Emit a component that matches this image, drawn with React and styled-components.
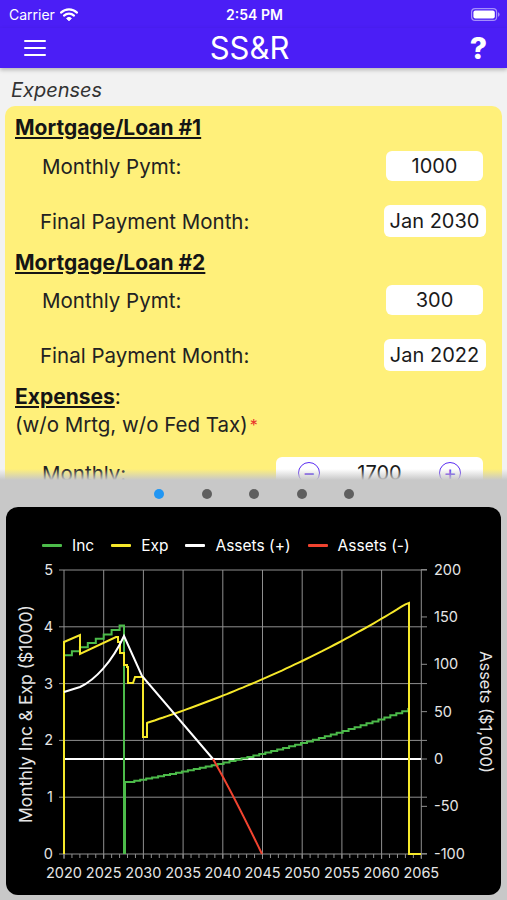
import styled, { createGlobalStyle } from "styled-components"

const GlobalStyle = createGlobalStyle`
  html, body { margin:0; padding:0; }
  body { font-family: Inter, "Noto Sans", sans-serif; background:#c8c8c8; }
`

const PURPLE = "#4b1ef6"

const Screen = styled.div`
  width:507px;
  height:900px;
  display:flex;
  flex-direction:column;
  overflow:hidden;
  background:#c8c8c8;
`

const StatusBar = styled.div`
  height:28px;
  flex:none;
  background:${PURPLE};
  color:#fff;
  display:grid;
  grid-template-columns:1fr auto 1fr;
  align-items:center;
  padding:0 7px 0 9px;
  font-size:14px;
`

const Carrier = styled.div`
  display:flex;
  align-items:center;
  gap:5px;
`

const Clock = styled.div`
  font-weight:600;
`

const Battery = styled.div`
  justify-self:end;
  display:flex;
  align-items:center;
`

const NavBar = styled.div`
  height:40px;
  flex:none;
  background:${PURPLE};
  color:#fff;
  display:grid;
  grid-template-columns:1fr auto 1fr;
  align-items:center;
  padding:0 20px 0 24px;
  position:relative;
  z-index:2;
  box-shadow:0 2px 4px rgba(0,0,0,0.25);
`

const Burger = styled.div`
  display:flex;
  flex-direction:column;
  gap:4.5px;
  & span{
    display:block;
    width:22px;
    height:2.5px;
    border-radius:1px;
    background:#fff;
  }
`

const Title = styled.div`
  font-size:31px;
  line-height:40px;
  margin-right:12px;
`

const Help = styled.div`
  justify-self:end;
  font-size:30px;
  font-weight:800;
  line-height:40px;
`

const FormArea = styled.div`
  flex:none;
  height:412px;
  position:relative;
  overflow:hidden;
  background:#f2f2f2;
  padding:11px 5px 0;
  box-sizing:border-box;
`

const PageTitle = styled.div`
  font-style:italic;
  font-size:20px;
  line-height:22px;
  color:#333;
  margin:0 0 5px 6px;
`

const Card = styled.div`
  background:#fff07a;
  border-radius:10px;
  padding:10px 10px 30px;
`

const Heading = styled.div`
  font-weight:700;
  font-size:21px;
  line-height:24px;
  color:#151515;
  margin-top:${p => p.$top || 0}px;
  & u{ text-underline-offset:2px; }
`

const SubNote = styled.div`
  font-size:20.5px;
  line-height:24px;
  color:#222;
  margin-top:4px;
`

const Star = styled.span`
  color:#e8322b;
  font-size:16px;
  vertical-align:top;
  margin-left:2px;
`

const Row = styled.div`
  display:flex;
  align-items:center;
  justify-content:space-between;
  margin-top:${p => p.$top}px;
  padding-right:${p => p.$right || 4}px;
`

const Label = styled.div`
  font-size:20.5px;
  color:#222;
  padding-left:${p => p.$indent}px;
`

const FieldSlot = styled.div`
  width:107px;
  display:flex;
  justify-content:center;
`

const Field = styled.div`
  width:${p => p.$w}px;
  height:${p => p.$h}px;
  background:#fff;
  border-radius:6px;
  display:flex;
  align-items:center;
  justify-content:center;
  font-size:20px;
  color:#1a1a1a;
`

const Stepper = styled.div`
  width:207px;
  height:32px;
  background:#fff;
  border-radius:6px;
  display:flex;
  align-items:center;
  justify-content:space-between;
  padding:0 22px 0 22px;
  box-sizing:border-box;
  font-size:20px;
  color:#1a1a1a;
`

const StepBtn = styled.div`
  width:22px;
  height:22px;
  border-radius:50%;
  border:1.5px solid #5a2cf2;
  color:#5a2cf2;
  display:flex;
  align-items:center;
  justify-content:center;
  font-size:20px;
  line-height:1;
  box-sizing:border-box;
`

const Fade = styled.div`
  position:absolute;
  left:0;
  right:0;
  bottom:0;
  height:11px;
  background:linear-gradient(to bottom, rgba(200,200,200,0), #c8c8c8);
`

const Pager = styled.div`
  height:27px;
  flex:none;
  display:flex;
  align-items:center;
  justify-content:center;
  gap:37.5px;
  padding-left:1px;
`

const Dot = styled.span`
  width:10px;
  height:10px;
  border-radius:50%;
  background:${p => (p.$on ? "#2196f3" : "#5f5f5f")};
`

const ChartCard = styled.div`
  flex:1;
  margin:0 6px 5px;
  background:#000;
  border-radius:12px;
  display:flex;
  flex-direction:column;
  overflow:hidden;
`

const Legend = styled.div`
  display:flex;
  align-items:center;
  gap:17px;
  padding:28px 0 0 36px;
  height:20px;
  flex:none;
  color:#fff;
  font-size:15.5px;
`

const LegendItem = styled.div`
  display:flex;
  align-items:center;
  gap:10px;
  &::before{
    content:"";
    width:20px;
    height:3px;
    border-radius:1px;
    background:${p => p.$color};
  }
`

const Plot = styled.svg`
  flex:1;
  display:block;
  width:100%;
  font-family: Inter, "Noto Sans", sans-serif;
`

// scales (page pixel coords)
const X = yr => 64 + (yr - 2020) * 7.94
const YL = v => 854 - v * 56.8
const YR = a => 759 - a * 0.947

const GREEN = "#4cbb4a"
const YELLOW = "#f6e82a"
const RED = "#f0432f"

function stairs(from, to, step, base, grow, xEnd) {
  let d = ""
  let yr = from
  while (yr < to - 0.001) {
    const next = Math.min(yr + step, to)
    const v = base * Math.pow(1 + grow, yr - from)
    d += `V${YL(v).toFixed(1)}`
    d += `H${(next === to ? xEnd : X(next)).toFixed(1)}`
    yr = next
  }
  return d
}

function expCurve(from, to, base, grow) {
  let d = ""
  for (let yr = from; yr <= to + 0.001; yr += 0.5) {
    const v = base * Math.pow(1 + grow, yr - from)
    d += `L${X(yr).toFixed(1)},${YL(v).toFixed(1)}`
  }
  return d
}

const Chart = () => {
  const years = []
  for (let y = 2020; y <= 2065; y++) years.push(y)
  const greenA = `M64,854 ` + stairs(2020, 2027.3, 1, 3.5, 0.02, 122) + ` H124 V854`
  const greenB = `M125,854 V782 ` + stairs(2028.1, 2063.4, 0.75, 1.27, 0.02, 409) + ` V854 H421`
  const yellow =
    `M64,854 V642 L80,635 V654 L116,637 H118 V642 H120 V653 H124 V665 H127 V667 H128 V683 H133 L135,677 H143 V737 H147 V723 ` +
    expCurve(2030.5, 2063.3, 2.31, 0.02) +
    ` L409,603 V854 H421`
  const white = `M64,692 L80,687 C95,680 112,662 124,636 L142,676 L213,759`
  const red = `M213,759 Q234,796 262,854`

  return (
    <Plot viewBox="6 555 495 340">
      {/* grid */}
      <g stroke="#8f8f8f" strokeWidth="1" fill="none">
        {[0, 1, 2, 3, 4, 5].map(v => (
          <line key={"h" + v} x1="59" x2="427" y1={YL(v)} y2={YL(v)} />
        ))}
        {[2020, 2025, 2030, 2035, 2040, 2045, 2050, 2055, 2060, 2065].map(y => (
          <line key={"v" + y} x1={X(y)} x2={X(y)} y1="570" y2="859" />
        ))}
        {[200, 150, 100, 50, 0, -50, -100].map(a => (
          <line key={"r" + a} x1="421" x2="427" y1={YR(a)} y2={YR(a)} />
        ))}
        {years.map(y => (
          <line key={"t" + y} x1={X(y)} x2={X(y)} y1="854" y2="858" />
        ))}
      </g>

      {/* labels */}
      <g fill="#e6e6e6" fontSize="14.5">
        {[0, 1, 2, 3, 4, 5].map(v => (
          <text key={"l" + v} x="53" y={YL(v) + 5} textAnchor="end">{v}</text>
        ))}
        {[200, 150, 100, 50, 0, -50, -100].map(a => (
          <text key={"rl" + a} x="434" y={YR(a) + 5}>{a}</text>
        ))}
        {[2020, 2025, 2030, 2035, 2040, 2045, 2050, 2055, 2060, 2065].map(y => (
          <text key={"b" + y} x={X(y)} y="878" textAnchor="middle">{y}</text>
        ))}
        <text x="27" y="714" fontSize="17.5" textAnchor="middle" dominantBaseline="middle" transform="rotate(-90 27 714)">
          Monthly Inc &amp; Exp ($1000)
        </text>
        <text x="484" y="712" fontSize="16.5" textAnchor="middle" dominantBaseline="middle" transform="rotate(90 484 712)">
          Assets ($1,000)
        </text>
      </g>

      {/* data */}
      <g fill="none" strokeWidth="2" strokeLinejoin="miter">
        <path d="M64,759 H421" stroke="#fff" />
        <path d={greenA} stroke={GREEN} />
        <path d={greenB} stroke={GREEN} />
        <path d={yellow} stroke={YELLOW} />
        <path d={white} stroke="#fff" />
        <path d={red} stroke={RED} />
      </g>
    </Plot>
  )
}

const Wifi = () => (
  <svg width="18" height="13" viewBox="0 0 18 13">
    <path d="M1 4.6 A11.5 11.5 0 0 1 17 4.6" stroke="#fff" strokeWidth="2.2" fill="none" strokeLinecap="round" />
    <path d="M4 7.6 A7.2 7.2 0 0 1 14 7.6" stroke="#fff" strokeWidth="2.2" fill="none" strokeLinecap="round" />
    <path d="M6.6 10.4 A3.4 3.4 0 0 1 11.4 10.4 L9 12.8 Z" fill="#fff" stroke="#fff" strokeWidth="1" strokeLinejoin="round" />
  </svg>
)

const BatteryIcon = () => (
  <svg width="29" height="13" viewBox="0 0 29 13">
    <rect x="0.6" y="0.6" width="25" height="11.8" rx="3.5" fill="none" stroke="rgba(255,255,255,0.5)" strokeWidth="1.2" />
    <rect x="2.4" y="2.4" width="21.4" height="8.2" rx="2" fill="#fff" />
    <path d="M27 4.3 Q28.6 4.6 28.6 6.5 Q28.6 8.4 27 8.7 Z" fill="rgba(255,255,255,0.5)" />
  </svg>
)

const App = () => {
  return (
    <Screen>
      <GlobalStyle />
      <StatusBar>
        <Carrier>Carrier <Wifi /></Carrier>
        <Clock>2:54 PM</Clock>
        <Battery><BatteryIcon /></Battery>
      </StatusBar>
      <NavBar>
        <Burger><span /><span /><span /></Burger>
        <Title>SS&amp;R</Title>
        <Help>?</Help>
      </NavBar>

      <FormArea>
        <PageTitle>Expenses</PageTitle>
        <Card>
          <Heading><u>Mortgage/Loan #1</u></Heading>
          <Row $top={11}>
            <Label $indent={27}>Monthly Pymt:</Label>
            <FieldSlot><Field $w={97} $h={30}>1000</Field></FieldSlot>
          </Row>
          <Row $top={24}>
            <Label $indent={25}>Final Payment Month:</Label>
            <FieldSlot><Field $w={102} $h={32}>Jan 2030</Field></FieldSlot>
          </Row>

          <Heading $top={14}><u>Mortgage/Loan #2</u></Heading>
          <Row $top={10}>
            <Label $indent={27}>Monthly Pymt:</Label>
            <FieldSlot><Field $w={97} $h={30}>300</Field></FieldSlot>
          </Row>
          <Row $top={24}>
            <Label $indent={25}>Final Payment Month:</Label>
            <FieldSlot><Field $w={102} $h={32}>Jan 2022</Field></FieldSlot>
          </Row>

          <Heading $top={14}><u>Expenses</u><span style={{ fontWeight: 400 }}>:</span></Heading>
          <SubNote>(w/o Mrtg, w/o Fed Tax)<Star>*</Star></SubNote>
          <Row $top={20} $right={9}>
            <Label $indent={27}>Monthly:</Label>
            <Stepper>
              <StepBtn>−</StepBtn>
              <span>1700</span>
              <StepBtn>+</StepBtn>
            </Stepper>
          </Row>
        </Card>
        <Fade />
      </FormArea>

      <Pager>
        <Dot $on />
        <Dot />
        <Dot />
        <Dot />
        <Dot />
      </Pager>

      <ChartCard>
        <Legend>
          <LegendItem $color={GREEN}>Inc</LegendItem>
          <LegendItem $color={YELLOW}>Exp</LegendItem>
          <LegendItem $color="#fff">Assets (+)</LegendItem>
          <LegendItem $color={RED}>Assets (-)</LegendItem>
        </Legend>
        <Chart />
      </ChartCard>
    </Screen>
  )
}

export default App
